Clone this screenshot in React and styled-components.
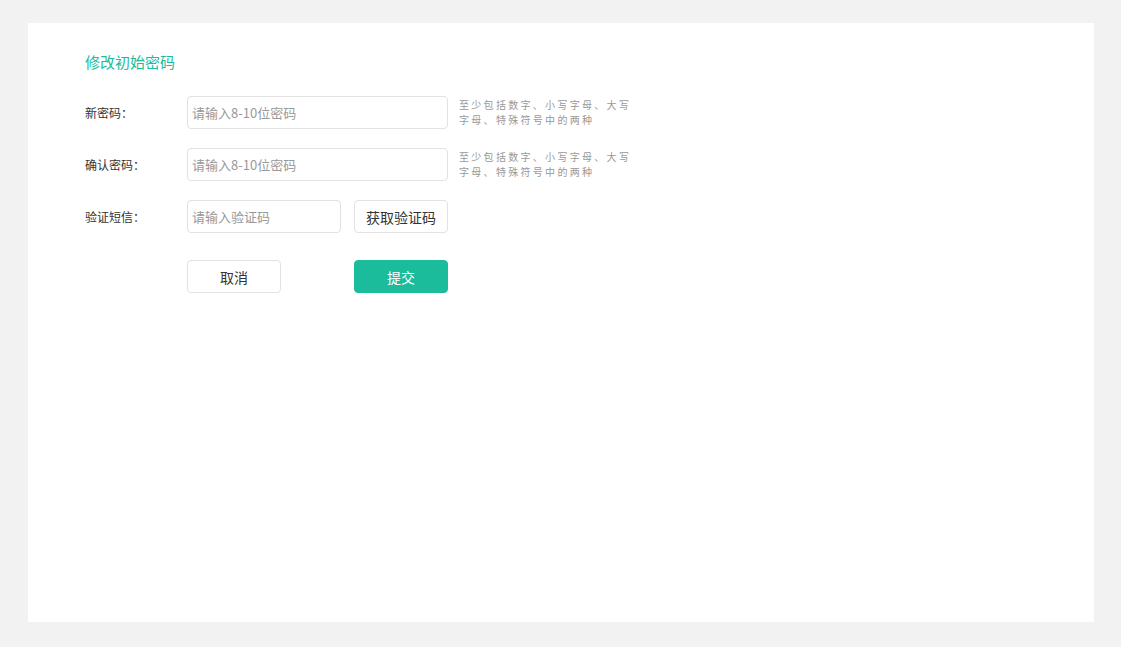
import React from "react";
import styled, { createGlobalStyle } from "styled-components";

const GlobalStyle = createGlobalStyle`
  html, body {
    margin: 0;
    padding: 0;
    background: #f2f2f2;
    font-family: "Noto Sans CJK SC", "Noto Sans", sans-serif;
  }
  * { box-sizing: border-box; }
`;

const Page = styled.div`
  padding: 23px 27px 25px 28px;
  height: 647px;
`;

const Card = styled.div`
  background: #fff;
  height: 599px;
  padding: 29px 57px;
`;

const Title = styled.h2`
  margin: 0 0 24px;
  font-size: 15px;
  line-height: 20px;
  font-weight: normal;
  color: #1abc9c;
`;

const Form = styled.div`
  display: flex;
  flex-direction: column;
  gap: 19px;
`;

const Row = styled.div`
  display: flex;
  align-items: ${(p) => (p.top ? "flex-start" : "center")};
`;

const Label = styled.label`
  width: 102px;
  font-size: 12px;
  color: #333;
  line-height: 33px;
`;

const Input = styled.input`
  width: ${(p) => p.w || 261}px;
  height: 33px;
  border: 1px solid #e2e2e2;
  border-radius: 4px;
  padding: 0 4px;
  font-size: 13px;
  font-family: inherit;
  color: #333;
  outline: none;
  &::placeholder {
    color: #999;
  }
`;

const Hint = styled.div`
  width: 180px;
  margin-left: 11px;
  padding-top: 1px;
  font-size: 10px;
  line-height: 15px;
  letter-spacing: 2.3px;
  color: #999;
`;

const Button = styled.button`
  width: 94px;
  height: 33px;
  border-radius: 4px;
  font-size: 14px;
  font-family: inherit;
  cursor: pointer;
  border: 1px solid ${(p) => (p.primary ? "#1abc9c" : "#e2e2e2")};
  background: ${(p) => (p.primary ? "#1abc9c" : "#fff")};
  color: ${(p) => (p.primary ? "#fff" : "#333")};
  margin-left: ${(p) => p.ml || 0}px;
  &:focus {
    outline: none;
  }
`;

const Actions = styled.div`
  display: flex;
  margin-top: 27px;
  padding-left: 102px;
`;

export default function App() {
  return (
    <>
      <GlobalStyle />
      <Page>
        <Card>
          <Title>修改初始密码</Title>
          <Form>
            <Row top>
              <Label>新密码：</Label>
              <Input type="password" placeholder="请输入8-10位密码" />
              <Hint>至少包括数字、小写字母、大写字母、特殊符号中的两种</Hint>
            </Row>
            <Row top>
              <Label>确认密码：</Label>
              <Input type="password" placeholder="请输入8-10位密码" />
              <Hint>至少包括数字、小写字母、大写字母、特殊符号中的两种</Hint>
            </Row>
            <Row>
              <Label>验证短信：</Label>
              <Input w={154} placeholder="请输入验证码" />
              <Button ml={13}>获取验证码</Button>
            </Row>
          </Form>
          <Actions>
            <Button>取消</Button>
            <Button primary ml={73}>提交</Button>
          </Actions>
        </Card>
      </Page>
    </>
  );
}
